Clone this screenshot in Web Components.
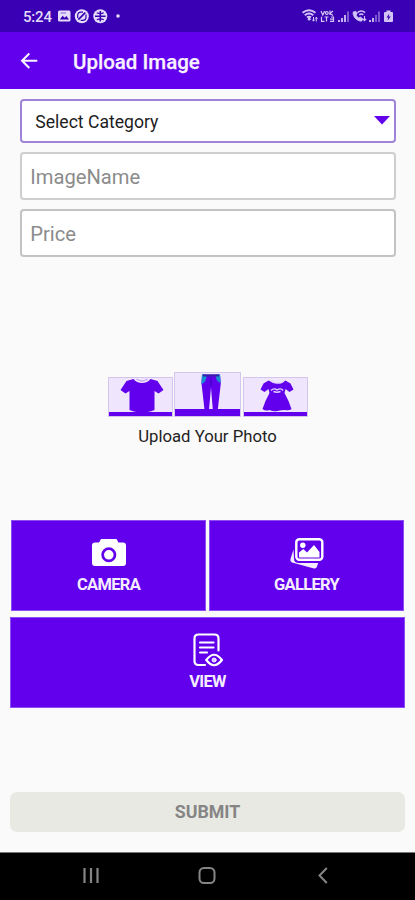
<!DOCTYPE html>
<html lang="en">
<head>
<meta charset="utf-8">
<title>Upload Image</title>
<style>
html,body{margin:0;height:100%;background:#fafafa;font-family:Roboto,"Liberation Sans",sans-serif}
</style>
</head>
<body>
<upload-screen></upload-screen>
<script>
const define = (name, html) => customElements.define(name, class extends HTMLElement {
  constructor() {
    super();
    this.attachShadow({mode: 'open'}).innerHTML = html;
  }
});

define('status-bar', `
<style>
:host{display:flex;align-items:center;justify-content:space-between;box-sizing:border-box;height:32px;padding:0 21px 0 23px;background:#3a00b3;color:#e4dcfa}
.left{display:flex;align-items:center}
.time{font-size:15px;line-height:20px;width:34px;font-weight:500;letter-spacing:-.2px;padding-top:1px;box-sizing:border-box}
svg{display:block}
</style>
<div class="left"><span class="time">5:24</span>
<svg width="66" height="18" viewBox="57 7 66 18">
<rect x="58" y="10.5" width="12.5" height="11" rx="1.5" fill="#e4dcfa"/><path d="M59.8 19.5l2.8-3.8 2 2 1.8-1.6 2.6 3.4z" fill="#3a00b3"/><path d="M60.5 13h5.5" stroke="#8865d3" stroke-width="1"/>
<circle cx="81.8" cy="16.2" r="7" fill="#e4dcfa"/><path d="M78.300 19.700l7-7" stroke="#3a00b3" stroke-width="1.700"/><path d="M77.700 18v-2.500q0-3.300 3.300-3.300h2M86 14.500V17q0 3.300-3.300 3.300h-2" fill="none" stroke="#3a00b3" stroke-width="1.200"/>
<circle cx="100.300" cy="16.200" r="7" fill="#e4dcfa"/><path d="M100.300 11v10.500M95 16.200h10.600" stroke="#3a00b3" stroke-width="1.600"/><path d="M96.800 12.800q3.500 1.600 7 0M96.800 19.700q3.500-1.600 7 0" fill="none" stroke="#3a00b3" stroke-width="1.200"/>
<circle cx="118" cy="16" r="1.800" fill="#e4dcfa"/>
</svg></div>
<svg width="93" height="16" viewBox="301 8 93 16" fill="none" stroke="#d3c5f5">
<path d="M302.500 12.800c4-3.200 9-3.200 13 0M304.800 15.200c2.700-2.100 5.800-2.100 8.500 0M307 17.400c1.400-1 2.700-1 4 0" stroke-width="2"/><circle cx="309.200" cy="19.200" r="1.400" fill="#d3c5f5" stroke="none"/>
<path d="M313.500 17v4M312.300 19.700l1.200 1.500 1.200-1.500M316.300 21.500v-4M315.100 18.700l1.200-1.500 1.200 1.500"/>
<path d="M321 11l1.800 4 1.800-4M325.500 13.500a1.400 1.400 0 1 1 2.600 0 1.400 1.400 0 0 1-2.600 0M330 10.500v4.500M333 11l-3 2.500 3 2M321.500 16.800v4.500h3M324.500 17h4M326.500 17v4.500M331 17h2.500v4.300H330M330 19.200h3" stroke-width="1.200"/>
<path d="M339 20v2M342 18v4M345 15v7" stroke-width="1.800"/><path d="M348 11.500V22" stroke="#9477dc" stroke-width="1.500"/>
<path d="M353 12.200c0 5 3.500 8.600 8.600 9l1.300-2.300-2.600-1.900-1.500 1c-1.300-.8-2.300-1.800-2.800-3l1.200-1.300-1.400-2.500z" fill="#d3c5f5" stroke-width=".8"/><path d="M357.500 12.600c2.500-2 5.200-2 7.500 0M359.300 14.800c1.300-1 2.700-1 4 0" stroke-width="1.600"/><path d="M364.500 16v5M362.900 18.800l1.600 1.800 1.700-1.800" stroke-width="1.100"/>
<path d="M370 20v2M373 18v4" stroke-width="1.800"/><path d="M376 15v7M379 11.500V22" stroke="#9477dc" stroke-width="1.500"/>
<path d="M386.500 10.500h4v1.500h1.500q1 0 1 1V21q0 1-1 1h-7q-1 0-1-1v-8q0-1 1-1h1.500z" fill="#d3c5f5" stroke="none"/><path d="M389.300 13.500l-2.800 4h1.800l-.8 3.300 3.200-4.300h-2z" fill="#3a00b3" stroke="none"/>
</svg>`);

define('app-bar', `
<style>
:host{display:flex;align-items:center;box-sizing:border-box;height:56.500px;padding:1px 20px 0;background:#6200ee;color:#f8f1ff}
svg{display:block;width:18px;height:18px}
h1{margin:2px 0 0 35px;font-size:20.500px;line-height:28px;font-weight:500;-webkit-text-stroke:.25px}
</style>
<svg viewBox="20 52 18 18" fill="none" stroke="#f8f1ff" stroke-width="2.100"><path d="M37.300 60.700H22.500M29.300 53.500l-7.200 7.200 7.200 7.200"/></svg>
<h1><slot></slot></h1>`);

define('form-field', `
<style>
:host{display:flex;align-items:center;box-sizing:border-box;width:376px;height:48px;padding:2px 4px 0 8.500px;border:2px solid #cececc;border-radius:4px;background:#fff;color:#8b8b8b;font-size:20.200px;line-height:28px}
:host([kind=select]){height:44px;padding:2px 4px 0 13.500px;border-color:#a084d8;color:#1d1d1d;font-size:17.600px}
:host([last]){border-color:#c3c3c3}
span{flex:1}
svg{display:none;width:16px;height:9px}
:host([kind=select]) svg{display:block;margin-top:-2px}
</style>
<span><slot></slot></span><svg viewBox="0 0 16 9"><path d="M0 0h16L8 8.500z" fill="#6200ee"/></svg>`);

define('clothing-tile', `
<style>
:host{display:flex;flex-direction:column;box-sizing:border-box;width:65px;height:40px;padding:1px;background:linear-gradient(#6200ee,#6200ee) bottom/100% 5px no-repeat,#efe5fd;box-shadow:inset 0 0 0 1px #d4c5ec}
:host([large]){width:67px;height:45px;background-size:100% 8px,auto}
</style><slot></slot>`);

define('upload-preview', `
<style>
:host{display:flex;flex-direction:column;align-items:center;padding-top:115.300px}
.tiles{display:flex;align-items:flex-end;gap:1.500px;height:45px}
svg{display:block}
p{margin:7.500px 0 0;font-size:16.700px;line-height:24px;color:#222}
</style>
<div class="tiles">
<clothing-tile><svg width="63" height="34" viewBox="108.500 378 63 34"><path d="M133 379l-7 2-6 9 5 3.500 4-2.500v19q6 2.500 12.500 2.500t12.500-2.500v-19l4 2.500 5-3.500-6-9-7-2q-3 4-8.500 4t-8.500-4z" fill="#6200ee"/><path d="M136 379q5.500 4 11 0" fill="#efe5fd" stroke="#c5a5ef" stroke-width="1.500"/></svg></clothing-tile>
<clothing-tile large><svg width="65" height="36" viewBox="175 373 65 36"><path d="M202 374.500h18l.8 9-3 26h-5l-1.800-22-2 22h-4.500l-3-26z" fill="#6200ee"/><path d="M202 374.500l-.6 9.500q5-1 5.400-9.500zM220 374.500l.7 8.500q-5-1-5-8.500z" fill="#168fd3"/><path d="M203 375.500h16" stroke="#3520a5" stroke-width="2"/><path d="M211 378v8" stroke="#3c00b4" stroke-width="1"/></svg></clothing-tile>
<clothing-tile><svg width="63" height="34" viewBox="244.500 378 63 34"><path d="M269 380.500l-5 3-3 6 4 2.500 4-3 1 4-4 8-3 8q3 2.500 7 1 4 2 8 1t7-1q5 1 7-1l-3-8-4-8 1-4 4 3 4-2.500-3-6-5-3q-3 3-8 3t-9-3z" fill="#6200ee"/><path d="M271.500 380q3 4 7 2.500 4 1.500 6-2.500M271.500 390.500q3-3 6-.5 4-2.500 6 .5M274 391.500q3.500 1.500 7 0" fill="none" stroke="#e6d5fb" stroke-width="1.400"/></svg></clothing-tile>
</div><p>Upload Your Photo</p>`);

define('action-button', `
<style>
:host{display:flex;flex-direction:column;align-items:center;box-sizing:border-box;height:91px;padding-top:16px;background:#6200ee;color:#f5edff;box-shadow:inset 0 0 0 1px #8e4df2}
.label{font-size:16.500px;line-height:20px;font-weight:700;margin-top:3px;letter-spacing:-.7px}
</style>
<slot name="icon"></slot><span class="label"><slot></slot></span>`);

define('action-grid', `
<style>
:host{display:grid;grid-template-columns:195.500px 195.500px;column-gap:2.500px;row-gap:6px;width:395px;justify-content:center;padding-top:70.700px}
.wide{grid-column:1/-1;margin:0 -.8px}
svg{display:block;width:36px;height:36px}
</style>
<action-button><svg slot="icon" viewBox="91.500 536 36 36"><path fill-rule="evenodd" d="M101.500 539h15.500l2 3.500h4.500q3 0 3 3V563q0 3-3 3H95.500q-3 0-3-3v-17.500q0-3 3-3h4zM109.300 547.300a7.500 7.500 0 1 0 0 15 7.500 7.500 0 0 0 0-15zM109.300 550a4.800 4.800 0 1 1 0 9.600 4.800 4.800 0 0 1 0-9.600z" fill="#fff"/></svg>CAMERA</action-button>
<action-button><svg slot="icon" viewBox="289 536.500 36 36"><path d="M293.500 550l-3 9.500q-.8 2.200 1.500 3.500l22 6q2.300.5 3-2l1.200-3.500H299q-5 0-5-4.500z" fill="#f5edff"/><rect x="296.300" y="539.800" width="26" height="20.500" rx="3" fill="#6200ee" stroke="#fff" stroke-width="2.400"/><circle cx="302.800" cy="545.800" r="2.700" fill="#fff"/><path d="M299 558v-5l4.300-3.500 3.700 3.500 7-7.500 5.500 7v5.500z" fill="#fff"/></svg>GALLERY</action-button>
<action-button class="wide"><svg slot="icon" viewBox="189.500 632.500 36 36" fill="none" stroke="#fff" stroke-width="2.200" stroke-linecap="round"><path d="M204.500 664.500h-6.500q-4 0-4-4v-22.500q0-4 4-4h16q4 0 4 4V650"/><path d="M199.500 642h13.500M199.500 647h13.500M199.500 652h7"/><path d="M205.800 659.500q7.800-10.500 15.600 0-7.800 10.500-15.600 0z"/><circle cx="213.600" cy="659.500" r="2" fill="#e0c8ff" stroke-width="1"/></svg>VIEW</action-button>`);

define('submit-button', `
<style>
:host{display:flex;align-items:center;justify-content:center;box-sizing:border-box;width:395px;height:40.500px;border-radius:7px;background:#e9e9e4;color:#858585;font-size:17.800px;line-height:24px;font-weight:700}
</style><slot></slot>`);

define('nav-bar', `
<style>
:host{display:flex;justify-content:center;align-items:center;box-sizing:border-box;height:48.500px;border-top:1px solid #777;background:#000}
svg{display:block}
</style>
<svg width="415" height="24" viewBox="0 864 415 24" fill="none" stroke="#858585"><path d="M84.500 868v15M91 868v15M97.500 868v15" stroke-width="2.200"/><rect x="199.500" y="868" width="15" height="15" rx="4.500" stroke-width="2"/><path d="M326.800 868l-7.300 7.500 7.300 7.500" stroke-width="2"/></svg>`);

define('upload-screen', `
<style>
:host{display:flex;flex-direction:column;width:415px;height:900px;background:#fafafa}
main{flex:1;display:flex;flex-direction:column;align-items:center}
.fields{display:flex;flex-direction:column;gap:9.300px;padding:10px 0 0 .5px}
submit-button{margin-top:auto;margin-bottom:19.500px}
</style>
<status-bar></status-bar>
<app-bar>Upload Image</app-bar>
<main>
<div class="fields"><form-field kind="select">Select Category</form-field><form-field>ImageName</form-field><form-field last>Price</form-field></div>
<upload-preview></upload-preview>
<action-grid></action-grid>
<submit-button>SUBMIT</submit-button>
</main>
<nav-bar></nav-bar>`);
</script>
</body>
</html>
